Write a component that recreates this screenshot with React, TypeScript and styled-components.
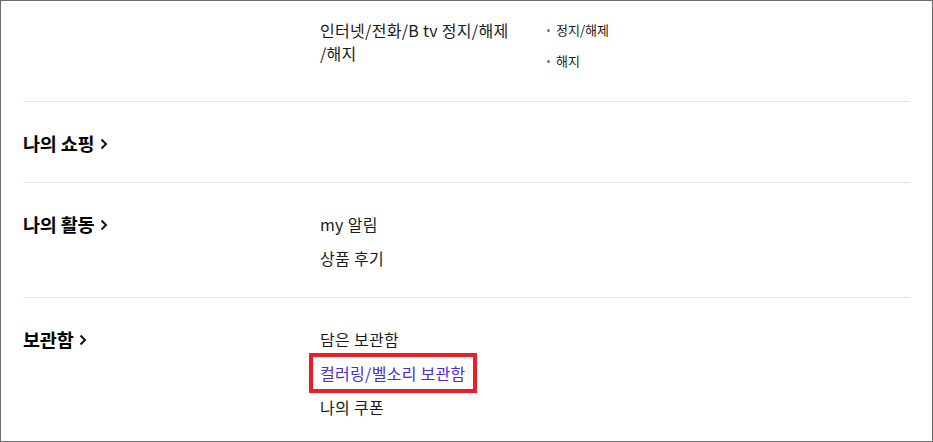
import styled, { createGlobalStyle } from "styled-components";

const GlobalStyle = createGlobalStyle`
  html, body {
    margin: 0;
    padding: 0;
    background: #ffffff;
  }
  body {
    font-family: "Noto Sans CJK KR", "Noto Sans", sans-serif;
    color: #111;
  }
  ul {
    list-style: none;
    margin: 0;
    padding: 0;
  }
`;

const Frame = styled.div`
  box-sizing: border-box;
  width: 933px;
  height: 442px;
  border: 1px solid #6b6b6b;
  padding: 0 22px;
  overflow: hidden;
  background: #fff;
`;

const Section = styled.section<{ $first?: boolean }>`
  display: grid;
  grid-template-columns: 297px 1fr;
  align-items: start;
  padding: ${({ $first }) => ($first ? "18px 0 30px" : "29px 0 27px")};
  border-bottom: 1px solid #e2e2e2;
`;

const Heading = styled.h3`
  display: flex;
  align-items: center;
  gap: 6px;
  margin: 0;
  font-size: 18.5px;
  line-height: 24px;
  font-weight: 700;
  color: #000;
  letter-spacing: -0.2px;
  > svg {
    margin-top: 1px;
  }
`;

const Items = styled.ul`
  display: flex;
  flex-direction: column;
  gap: 10px;
`;

const Item = styled.li<{ $marked?: boolean }>`
  position: relative;
  font-size: 16px;
  line-height: 24px;
  letter-spacing: 0.3px;
  color: ${({ $marked }) => ($marked ? "#4a2bd4" : "#1a1a1a")};
  width: fit-content;
  &::after {
    content: "";
    display: ${({ $marked }) => ($marked ? "block" : "none")};
    position: absolute;
    inset: -8px -11px -8px -11px;
    border: 4px solid #e8202a;
  }
`;

const ServiceRow = styled.div`
  display: flex;
`;

const ServiceTitle = styled.div`
  width: 227px;
  font-size: 16px;
  line-height: 23px;
  letter-spacing: 0.3px;
  color: #1a1a1a;
`;

const SubList = styled.ul`
  display: flex;
  flex-direction: column;
  gap: 11px;
  padding-top: 1px;
`;

const SubItem = styled.li`
  display: flex;
  align-items: center;
  gap: 6px;
  font-size: 13px;
  line-height: 20px;
  color: #1a1a1a;
  &::before {
    content: "";
    width: 3px;
    height: 3px;
    border-radius: 50%;
    background: #777;
  }
`;

const Chevron = () => (
  <svg width="8" height="12" viewBox="0 0 8 12" fill="none">
    <path d="M1.5 1.5 L6 6 L1.5 10.5" stroke="#111" strokeWidth="2" />
  </svg>
);

const groups = [
  { title: "나의 쇼핑", items: [] as string[] },
  { title: "나의 활동", items: ["my 알림", "상품 후기"] },
  { title: "보관함", items: ["담은 보관함", "컬러링/벨소리 보관함", "나의 쿠폰"] },
];

const App = () => {
  return (
    <>
      <GlobalStyle />
      <Frame>
        <Section $first>
          <div />
          <ServiceRow>
            <ServiceTitle>
              인터넷/전화/B tv 정지/해제
              <br />
              /해지
            </ServiceTitle>
            <SubList>
              <SubItem>정지/해제</SubItem>
              <SubItem>해지</SubItem>
            </SubList>
          </ServiceRow>
        </Section>
        {groups.map((group) => (
          <Section key={group.title}>
            <Heading>
              {group.title}
              <Chevron />
            </Heading>
            {group.items.length > 0 && (
              <Items>
                {group.items.map((item) => (
                  <Item key={item} $marked={item === "컬러링/벨소리 보관함"}>
                    {item}
                  </Item>
                ))}
              </Items>
            )}
          </Section>
        ))}
      </Frame>
    </>
  );
};

export default App;
